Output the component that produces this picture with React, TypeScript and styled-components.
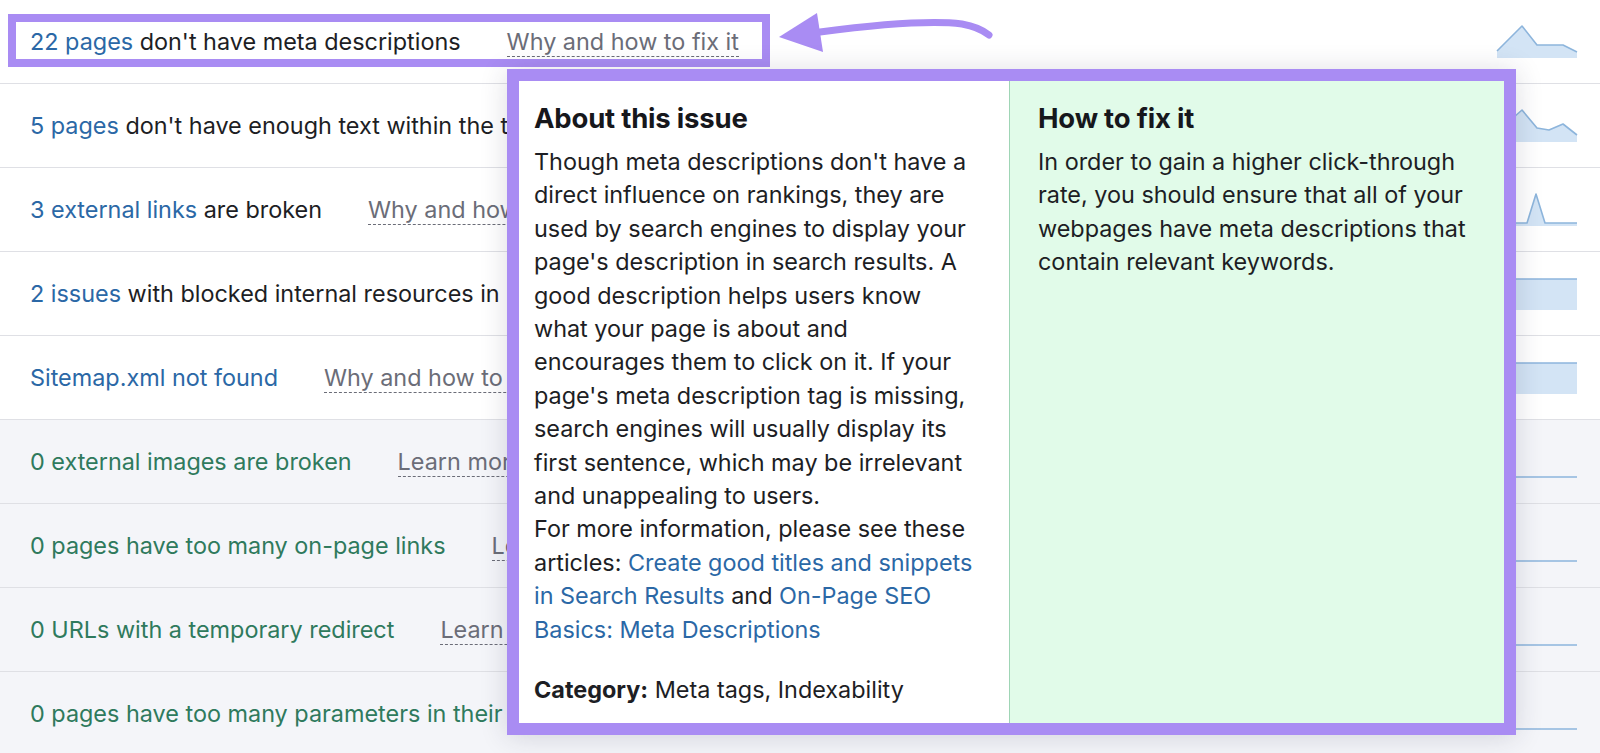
import React from "react";
import styled, { createGlobalStyle } from "styled-components";

const Global = createGlobalStyle`
  html, body { margin: 0; padding: 0; background: #fff; }
  body { font-family: Inter, "Noto Sans", sans-serif; overflow: hidden; }
  * { box-sizing: border-box; }
`;

const PURPLE = "#a98cf3";

const Page = styled.div`
  position: relative;
  width: 1600px;
  height: 753px;
  overflow: hidden;
  background: #fff;
`;

const List = styled.div`
  display: flex;
  flex-direction: column;
`;

const Row = styled.div<{ $muted?: boolean }>`
  display: flex;
  align-items: center;
  height: 84px;
  flex: none;
  border-bottom: 1px solid #dfe0e5;
  background: ${(p) => (p.$muted ? "#f4f5f9" : "#ffffff")};
  padding: 0 23px 0 30px;
`;

const Issue = styled.div<{ $clip?: boolean }>`
  flex: ${(p) => (p.$clip ? "0 0 477px" : "1")};
  min-width: 0;
  display: flex;
  align-items: center;
  gap: 46px;
  white-space: nowrap;
  overflow: hidden;
  font-size: 23.4px;
  color: #1d1e24;
`;

const Filler = styled.div`
  flex: 1;
`;

const Title = styled.span<{ $tone: "dark" | "blue" | "green" }>`
  color: ${(p) => (p.$tone === "green" ? "#2f7a5d" : p.$tone === "blue" ? "#2b68a6" : "#1d1e24")};
`;

const Count = styled.span`
  color: #2b68a6;
`;

const Hint = styled.span`
  color: #6b6d78;
  border-bottom: 1.5px dashed #6b6d78;
`;

const Spark = styled.svg`
  flex: none;
  width: 80px;
  height: 32px;
  overflow: visible;
`;

const Highlight = styled.div`
  position: absolute;
  left: 8px;
  top: 14px;
  width: 762px;
  height: 53px;
  border: 8px solid ${PURPLE};
  pointer-events: none;
`;

const Arrow = styled.svg`
  position: absolute;
  left: 770px;
  top: 0;
  width: 230px;
  height: 70px;
`;

const Popup = styled.div`
  position: absolute;
  left: 507px;
  top: 69px;
  width: 1009px;
  height: 666px;
  border: 12px solid ${PURPLE};
  display: grid;
  grid-template-columns: 490px 1fr;
  box-shadow: 0 2px 26px rgba(40, 40, 70, 0.16);
`;

const Pane = styled.div<{ $fix?: boolean }>`
  background: ${(p) => (p.$fix ? "#e1fbe9" : "#ffffff")};
  border-left: ${(p) => (p.$fix ? "1px solid #9fd5b5" : "none")};
  padding: ${(p) => (p.$fix ? "21px 20px 16px 28px" : "21px 28px 16px 15px")};
  color: #1d1e24;
`;

const PaneTitle = styled.h3`
  margin: 0 0 11px;
  font-size: 27.5px;
  line-height: 32px;
  font-weight: 700;
  letter-spacing: -0.2px;
  color: #16171c;
`;

const Text = styled.p<{ $gap?: number }>`
  margin: ${(p) => p.$gap ?? 0}px 0 0;
  font-size: 23.4px;
  line-height: 33.4px;
`;

const A = styled.a`
  color: #2b68a6;
  text-decoration: none;
`;

const Strong = styled.b`
  font-weight: 700;
`;

type SparkKind = "peak" | "double" | "spike" | "full" | "zero";

const sparkPoints: Record<SparkKind, [number, number][]> = {
  peak: [[0, 25], [25, 0], [40, 19], [66, 19], [80, 26]],
  double: [[0, 22], [25, 0], [40, 18], [52, 20], [66, 14], [80, 25]],
  spike: [[0, 29], [30, 29], [39, 0], [48, 29], [80, 29]],
  full: [[0, 1], [80, 1]],
  zero: [[0, 31], [80, 31]],
};

function Sparkline({ kind }: { kind: SparkKind }) {
  const pts = sparkPoints[kind];
  const line = pts.map((p) => p.join(",")).join(" ");
  const area = `0,32 ${line} 80,32`;
  return (
    <Spark viewBox="0 0 80 32">
      {kind !== "zero" && <polygon points={area} fill="#d3e4f5" />}
      <polyline points={line} fill="none" stroke="#8db5dc" strokeWidth="1.6" strokeLinejoin="round" />
    </Spark>
  );
}

type IssueRow = {
  count?: string;
  text: string;
  tone: "dark" | "blue" | "green";
  hint: string;
  spark: SparkKind;
};

const rows: IssueRow[] = [
  { count: "22 pages", text: " don't have meta descriptions", tone: "dark", hint: "Why and how to fix it", spark: "peak" },
  { count: "5 pages", text: " don't have enough text within the title tags", tone: "dark", hint: "Why and how to fix it", spark: "double" },
  { count: "3 external links", text: " are broken", tone: "dark", hint: "Why and how to fix it", spark: "spike" },
  { count: "2 issues", text: " with blocked internal resources in robots.txt", tone: "dark", hint: "Why and how to fix it", spark: "full" },
  { text: "Sitemap.xml not found", tone: "blue", hint: "Why and how to fix it", spark: "full" },
  { text: "0 external images are broken", tone: "green", hint: "Learn more", spark: "zero" },
  { text: "0 pages have too many on-page links", tone: "green", hint: "Learn more", spark: "zero" },
  { text: "0 URLs with a temporary redirect", tone: "green", hint: "Learn more", spark: "zero" },
  { text: "0 pages have too many parameters in their URLs", tone: "green", hint: "Learn more", spark: "zero" },
];

export default function App() {
  return (
    <Page>
      <Global />
      <List>
        {rows.map((r, i) => (
          <Row key={i} $muted={r.tone === "green"}>
            <Issue $clip={i > 0}>
              <Title $tone={r.tone}>
                {r.count && <Count>{r.count}</Count>}
                {r.text}
              </Title>
              <Hint>{r.hint}</Hint>
            </Issue>
            <Filler />
            <Sparkline kind={r.spark} />
          </Row>
        ))}
      </List>

      <Highlight />

      <Arrow viewBox="0 0 230 70">
        <path d="M50 32 Q 150 19, 192 24 Q 209 27, 219 35" fill="none" stroke={PURPLE} strokeWidth="7" strokeLinecap="round" />
        <polygon points="9,37 47,13 53,52" fill={PURPLE} />
      </Arrow>

      <Popup>
        <Pane>
          <PaneTitle>About this issue</PaneTitle>
          <Text>
            Though meta descriptions don't have a direct influence on rankings, they are used by search engines to
            display your page's description in search results. A good description helps users know what your page is
            about and encourages them to click on it. If your page's meta description tag is missing, search engines
            will usually display its first sentence, which may be irrelevant and unappealing to users.
          </Text>
          <Text>
            For more information, please see these articles: <A>Create good titles and snippets in Search Results</A>{" "}
            and <A>On-Page SEO Basics: Meta Descriptions</A>
          </Text>
          <Text $gap={27}>
            <Strong>Category:</Strong> Meta tags, Indexability
          </Text>
        </Pane>
        <Pane $fix>
          <PaneTitle>How to fix it</PaneTitle>
          <Text>
            In order to gain a higher click-through rate, you should ensure that all of your webpages have meta
            descriptions that contain relevant keywords.
          </Text>
        </Pane>
      </Popup>
    </Page>
  );
}
